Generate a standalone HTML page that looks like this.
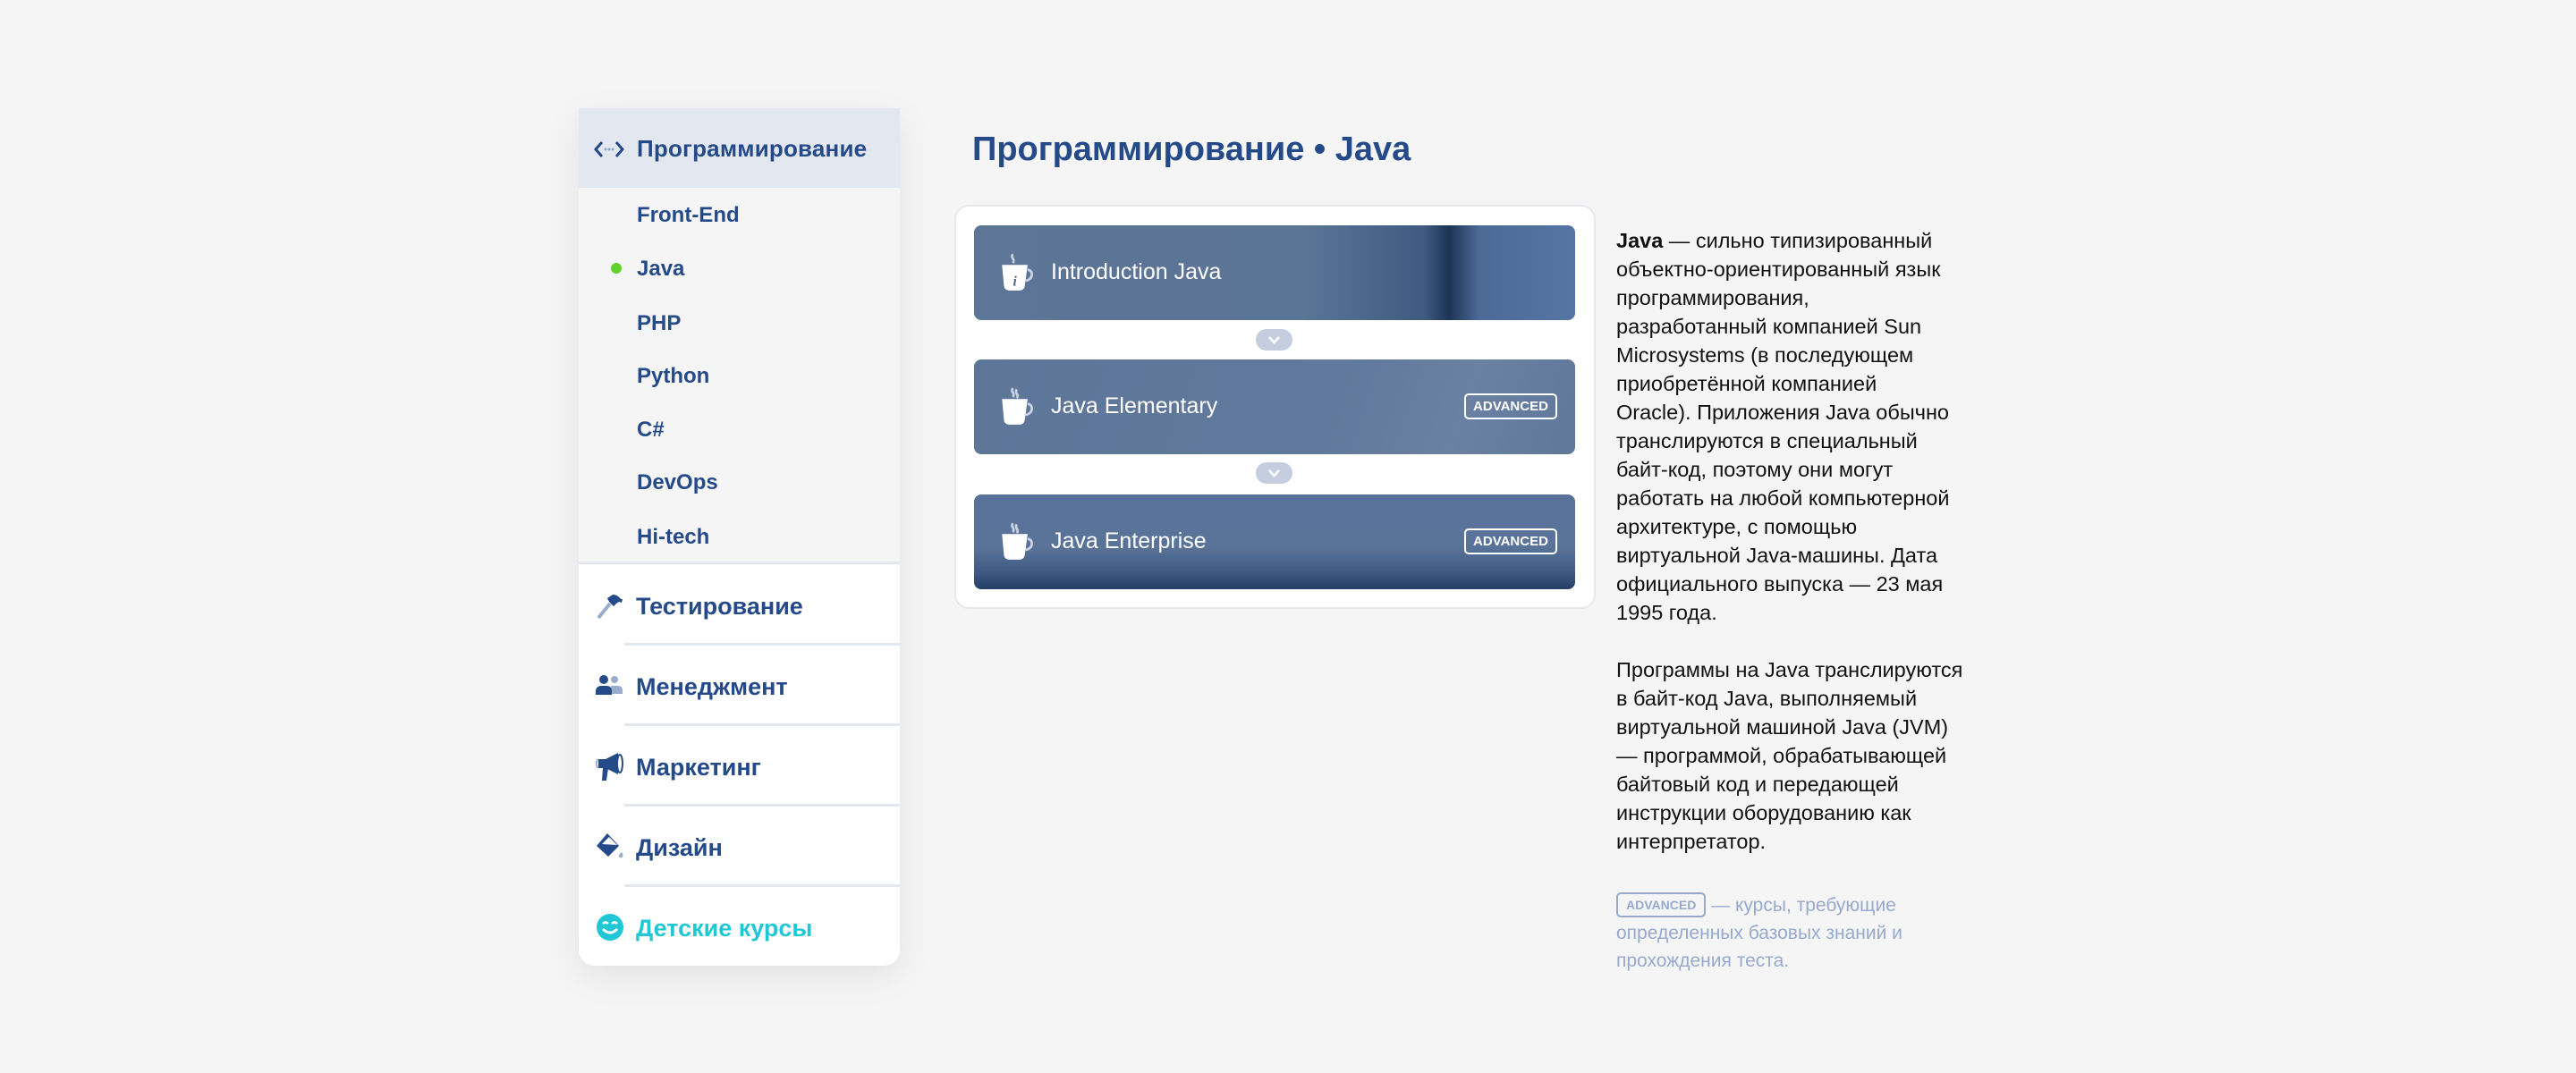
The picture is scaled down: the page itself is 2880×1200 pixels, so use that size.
<!DOCTYPE html>
<html><head><meta charset="utf-8"><style>
*{margin:0;padding:0;box-sizing:border-box}
body{width:2880px;height:1200px;background:#f5f5f5;font-family:"Liberation Sans",sans-serif;position:relative;overflow:hidden;color:#254a8a}
.side{position:absolute;left:647px;top:121px;width:359px;height:959px;background:#fff;border-radius:0 0 18px 18px;box-shadow:0 12px 40px rgba(0,0,0,.08);overflow:hidden}
.hd{position:absolute;left:0;top:0;width:100%;height:89px;background:#e3e7ef}
.hd span{position:absolute;left:65px;top:30px;font-size:26px;font-weight:bold;letter-spacing:.2px}
.sub{position:absolute;left:0;top:89px;width:100%;height:421px;background:#f5f5f5;border-bottom:3px solid #e3e7ef}
.si{position:absolute;left:65px;font-size:24px;font-weight:bold}
.dot{position:absolute;left:36px;width:12px;height:12px;border-radius:50%;background:#5fd12a}
.it{position:absolute;left:0;width:100%;height:90px}
.it span{position:absolute;left:64px;top:30px;font-size:27px;font-weight:bold}
.it svg{position:absolute;left:19px;top:28px}
.dv{position:absolute;left:51px;right:0;height:3px;background:#e3e7ef}
h1{position:absolute;left:1087px;top:146px;font-size:38px;font-weight:bold;color:#254a8a}
.card{position:absolute;left:1067px;top:229px;width:717px;height:452px;background:#fff;border:2px solid #e6e8ec;border-radius:16px}
.tile{position:absolute;left:1089px;width:672px;height:106px;border-radius:8px;overflow:hidden;color:#fff}
.tile .t{position:absolute;left:86px;top:38px;font-size:25px}
.tile svg.cup{position:absolute;left:28px;top:30px}
.badge{position:absolute;right:20px;top:38px;height:29px;width:104px;border:2px solid #fff;border-radius:5px;font-size:15px;font-weight:bold;text-align:center;line-height:25px}
.chev{position:absolute;left:1404px;width:41px;height:24px;border-radius:12px;background:#c5cede}
.txt{position:absolute;left:1807px;top:253px;font-size:23.5px;line-height:32px;color:#111;white-space:nowrap}
.note{position:absolute;left:1807px;top:997px;font-size:21px;line-height:31px;color:#97a9cd;white-space:nowrap}
.nb{display:inline-block;border:2px solid #97a9cd;border-radius:5px;font-size:14px;font-weight:bold;padding:0 9px;line-height:24px;vertical-align:2px}
</style></head><body>
<div class="side">
 <div class="hd">
  <svg style="position:absolute;left:17px;top:35px" width="34" height="22" viewBox="0 0 34 22"><path d="M9 3L2 11l7 8M25 3l7 8-7 8" stroke="#254a8a" stroke-width="3" fill="none"/><circle cx="13" cy="11" r="1.5" fill="#8fa3c8"/><circle cx="17" cy="11" r="1.5" fill="#8fa3c8"/><circle cx="21" cy="11" r="1.5" fill="#8fa3c8"/></svg>
  <span>Программирование</span>
 </div>
 <div class="sub">
  <div class="si" style="top:17px">Front-End</div>
  <div class="dot" style="top:84px"></div>
  <div class="si" style="top:77px">Java</div>
  <div class="si" style="top:138px">PHP</div>
  <div class="si" style="top:197px">Python</div>
  <div class="si" style="top:257px">C#</div>
  <div class="si" style="top:316px">DevOps</div>
  <div class="si" style="top:377px">Hi-tech</div>
 </div>
 <div class="it" style="top:512px"><svg width="32" height="32" viewBox="0 0 32 32"><path d="M3 30L16 14" stroke="#9aaccb" stroke-width="4"/><path d="M13 8l6-4c4 0 7 2 9 5l2 0-1 4-3-1-3 2-3 3-5-5z" fill="#254a8a"/></svg><span>Тестирование</span></div>
 <div class="dv" style="top:598px"></div>
 <div class="it" style="top:602px"><svg width="32" height="32" viewBox="0 0 32 32"><circle cx="9" cy="9" r="5" fill="#254a8a"/><circle cx="21" cy="9" r="4" fill="#9aaccb"/><path d="M17 16h8c3 0 5 2 5 5v4H17z" fill="#9aaccb"/><path d="M0 26v-4c0-4 3-6 6-6h6c4 0 6 2 6 6v4z" fill="#254a8a"/></svg><span>Менеджмент</span></div>
 <div class="dv" style="top:688px"></div>
 <div class="it" style="top:692px"><svg width="32" height="34" viewBox="0 0 32 34"><path d="M3 8h8l14-7v24l-14-7H3z" fill="#254a8a"/><path d="M8 18h6l-2 14H7z" fill="#254a8a"/><ellipse cx="27" cy="13" rx="3" ry="10" fill="#fff" stroke="#254a8a" stroke-width="2"/><path d="M3 8c-3 2-3 8 0 10" stroke="#9aaccb" stroke-width="2" fill="none"/></svg><span>Маркетинг</span></div>
 <div class="dv" style="top:778px"></div>
 <div class="it" style="top:782px"><svg width="32" height="34" viewBox="0 0 32 34"><path d="M13 1l13 14-12 12L1 15z" fill="#254a8a"/><path d="M7 13l8-8 9 9z" fill="#fff"/><path d="M29 22c2 3 2 5 0 6s-4-1-3-3z" fill="#9aaccb"/></svg><span>Дизайн</span></div>
 <div class="dv" style="top:868px"></div>
 <div class="it" style="top:872px"><svg width="32" height="32" viewBox="0 0 32 32"><circle cx="16" cy="16" r="15" fill="#1fc8d4"/><path d="M8 12q3-3 6 0M18 12q3-3 6 0" stroke="#fff" stroke-width="2.5" fill="none"/><path d="M8 18q8 8 16 0" stroke="#fff" stroke-width="3" fill="none"/></svg><span style="color:#1fc8d4">Детские курсы</span></div>
</div>

<h1>Программирование • Java</h1>
<div class="card"></div>

<div class="tile" style="top:252px;background:linear-gradient(90deg,#5d7596 0%,#5b7597 55%,#3f5a80 75%,#1d3355 79%,#4c6a96 84%,#5576a3 100%)">
 <svg class="cup" width="44" height="44" viewBox="0 0 40 40"><path d="M14 2c-3 4 3 5 0 9" stroke="#c9d3e3" stroke-width="2.5" fill="none"/><path d="M3 13h26l-3 22c-1 3-3 4-6 4h-9c-3 0-5-1-6-4z" fill="#fff"/><path d="M29 18c6 0 6 10-2 11" stroke="#c9d3e3" stroke-width="2.5" fill="none"/><text x="16" y="34" font-family="Liberation Serif" font-style="italic" font-weight="bold" font-size="14" fill="#4c6487" text-anchor="middle">i</text></svg>
 <div class="t">Introduction Java</div>
</div>
<div class="chev" style="top:368px"><svg width="41" height="24" viewBox="0 0 41 24"><path d="M15 9l5.5 6 5.5-6" stroke="#fff" stroke-width="2.5" fill="none"/></svg></div>

<div class="tile" style="top:402px;background:linear-gradient(110deg,#5d7698 0%,#61799c 60%,#6a81a3 80%,#5f7799 100%)">
 <svg class="cup" width="44" height="44" viewBox="0 0 40 40"><path d="M14 2c-3 4 3 5 0 9M18 3c-3 4 3 5 0 9" stroke="#c9d3e3" stroke-width="2.5" fill="none"/><path d="M3 13h26l-3 22c-1 3-3 4-6 4h-9c-3 0-5-1-6-4z" fill="#fff"/><path d="M29 18c6 0 6 10-2 11" stroke="#c9d3e3" stroke-width="2.5" fill="none"/></svg>
 <div class="t">Java Elementary</div><div class="badge">ADVANCED</div>
</div>
<div class="chev" style="top:517px"><svg width="41" height="24" viewBox="0 0 41 24"><path d="M15 9l5.5 6 5.5-6" stroke="#fff" stroke-width="2.5" fill="none"/></svg></div>

<div class="tile" style="top:553px;background:linear-gradient(180deg,#58729a 0%,#5a7499 55%,#3f5a83 82%,#253e66 100%)">
 <svg class="cup" width="44" height="44" viewBox="0 0 40 40"><path d="M14 2c-3 4 3 5 0 9M18 3c-3 4 3 5 0 9" stroke="#c9d3e3" stroke-width="2.5" fill="none"/><path d="M3 13h26l-3 22c-1 3-3 4-6 4h-9c-3 0-5-1-6-4z" fill="#fff"/><path d="M29 18c6 0 6 10-2 11" stroke="#c9d3e3" stroke-width="2.5" fill="none"/></svg>
 <div class="t">Java Enterprise</div><div class="badge">ADVANCED</div>
</div>

<div class="txt"><b>Java</b> — сильно типизированный<br>объектно-ориентированный язык<br>программирования,<br>разработанный компанией Sun<br>Microsystems (в последующем<br>приобретённой компанией<br>Oracle). Приложения Java обычно<br>транслируются в специальный<br>байт-код, поэтому они могут<br>работать на любой компьютерной<br>архитектуре, с помощью<br>виртуальной Java-машины. Дата<br>официального выпуска — 23 мая<br>1995 года.<br><br>Программы на Java транслируются<br>в байт-код Java, выполняемый<br>виртуальной машиной Java (JVM)<br>— программой, обрабатывающей<br>байтовый код и передающей<br>инструкции оборудованию как<br>интерпретатор.</div>
<div class="note"><span class="nb">ADVANCED</span> — курсы, требующие<br>определенных базовых знаний и<br>прохождения теста.</div>
</body></html>
